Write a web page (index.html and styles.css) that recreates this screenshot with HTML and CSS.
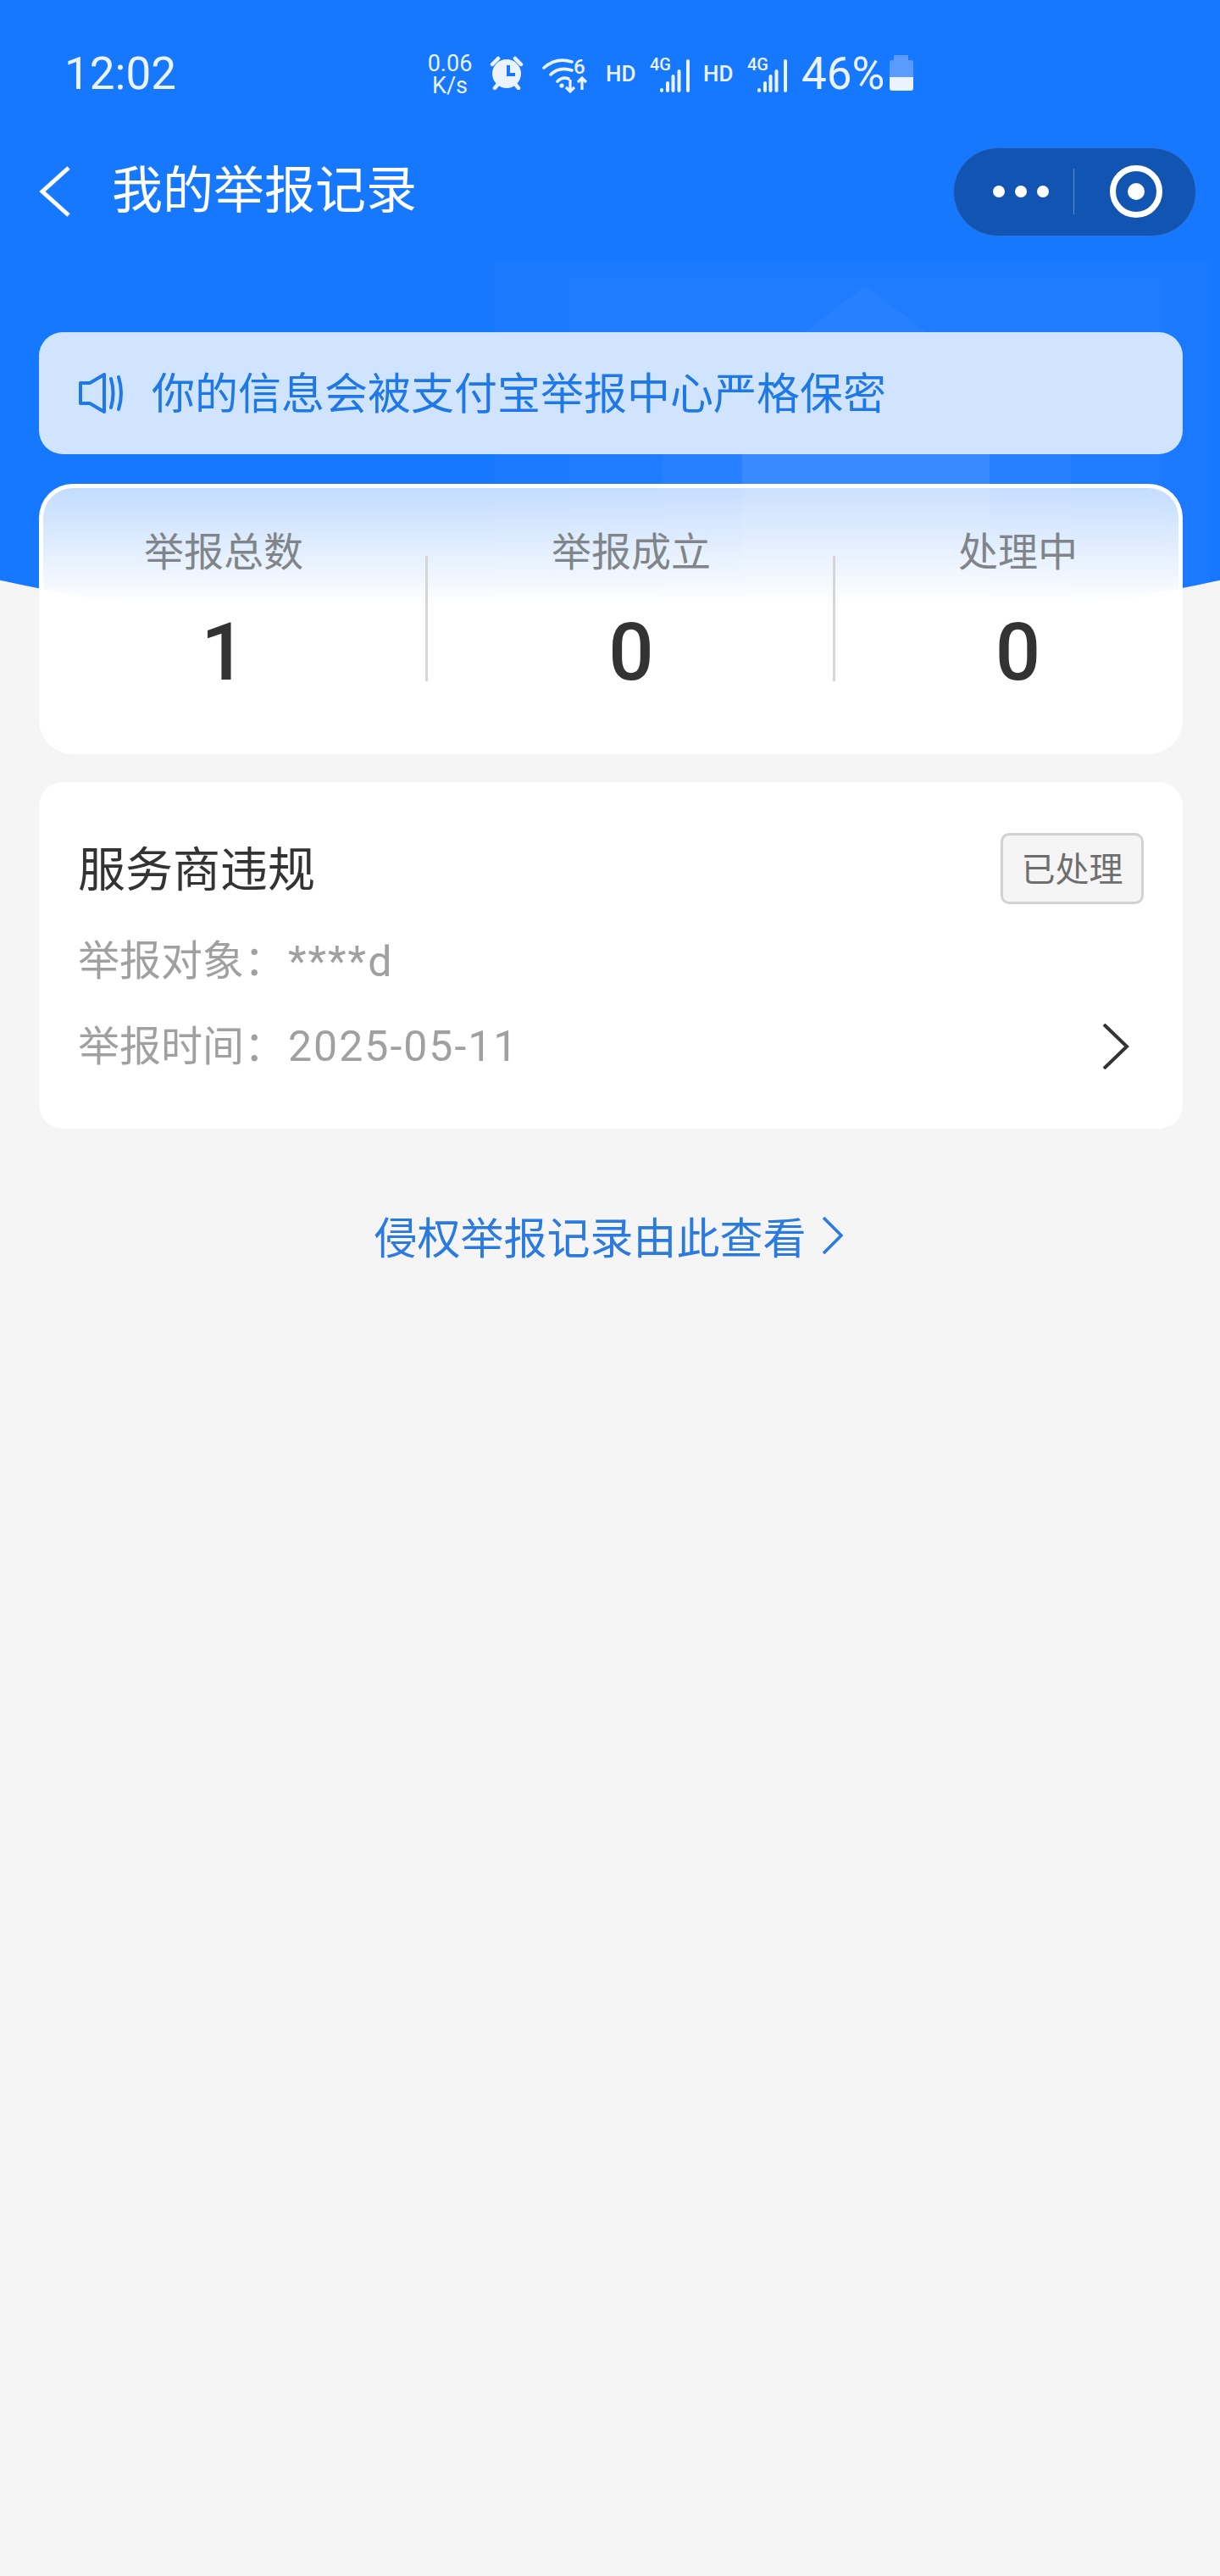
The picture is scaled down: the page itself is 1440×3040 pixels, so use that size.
FILE: index.html
```html
<!DOCTYPE html>
<html lang="zh-CN">
<head>
<meta charset="utf-8">
<title>我的举报记录</title>
<link rel="stylesheet" href="styles.css">
</head>
<body>
<div class="page">
  <div class="hero">
    <svg class="watermark" viewBox="0 0 1440 770" width="1440" height="770" aria-hidden="true">
      <rect x="585" y="310" width="843" height="460" fill="#fff" opacity=".018"/>
      <rect x="672" y="327" width="700" height="443" fill="#fff" opacity=".025"/>
      <path d="M1021 337 L782 520 V770 H1264 V520 Z" fill="#fff" opacity=".03"/>
      <rect x="876" y="440" width="292" height="330" fill="#fff" opacity=".08"/>
    </svg>
  </div>

  <div class="content">
    <div class="status">
      <span class="time">12:02</span>
      <div class="indicators">
        <div class="speed"><span>0.06</span><span>K/s</span></div>
        <svg class="alarm" viewBox="0 0 40 40" width="40" height="40" aria-hidden="true">
          <circle cx="20" cy="21" r="17" fill="#eaf3ff"/>
          <path d="M3 10 L10 3 M37 10 L30 3 M6 38 L10 33 M34 38 L30 33" stroke="#eaf3ff" stroke-width="4.5" stroke-linecap="round" fill="none"/>
          <path d="M22 11 V22 H30" stroke="#1677ff" stroke-width="4" fill="none"/>
        </svg>
        <svg class="wifi" viewBox="0 -6 54 48" width="54" height="48" aria-hidden="true">
          <path d="M2 12 Q17 -1 35 5 M10 20 Q20 10 35 15 M18 28 Q24 22 31 25" stroke="#eaf3ff" stroke-width="3.6" stroke-linecap="round" fill="none"/>
          <circle cx="23" cy="33" r="2.6" fill="#eaf3ff"/>
          <path d="M33 26 V40 M28 35 L33 40 L38 35 M47 38 V24 M42 29 L47 24 L52 29" stroke="#eaf3ff" stroke-width="3.2" fill="none"/>
          <text x="37" y="19" class="wifi-num">6</text>
        </svg>
        <span class="hd hd-first">HD</span>
        <svg class="signal" viewBox="0 -6 48 48" width="48" height="48" aria-hidden="true">
          <text x="0" y="15" class="sig-text">4G</text>
          <path d="M14 38 V39 M21 30 V39 M27.500 22 V39 M34.500 16 V39 M45 4 V39" stroke="#eaf3ff" stroke-width="4" stroke-linecap="round" fill="none"/>
        </svg>
        <span class="hd">HD</span>
        <svg class="signal" viewBox="0 -6 48 48" width="48" height="48" aria-hidden="true">
          <text x="0" y="15" class="sig-text">4G</text>
          <path d="M14 38 V39 M21 30 V39 M27.500 22 V39 M34.500 16 V39 M45 4 V39" stroke="#eaf3ff" stroke-width="4" stroke-linecap="round" fill="none"/>
        </svg>
        <span class="battery-pct">46%</span>
        <svg class="battery" viewBox="0 0 28 42" width="28" height="42" aria-hidden="true">
          <path d="M6 0 H21 Q22 0 22 1 V6 H25 Q28 6 28 9 V26 H0 V9 Q0 6 3 6 H5 V1 Q5 0 6 0 Z" fill="#5b9bff"/>
          <path d="M0 26 H28 V39 Q28 42 25 42 H3 Q0 42 0 39 Z" fill="#eaf3ff"/>
        </svg>
      </div>
    </div>

    <div class="nav">
      <svg class="back" viewBox="0 0 38 60" width="38" height="60" aria-hidden="true">
        <path d="M35 2 L4 30 L35 58" stroke="#fff" stroke-width="5" fill="none"/>
      </svg>
      <h1 class="title">我的举报记录</h1>
      <div class="capsule">
        <div class="dots"><i></i><i></i><i></i></div>
        <span class="capsule-line"></span>
        <svg class="target" viewBox="0 0 62 62" width="62" height="62" aria-hidden="true">
          <circle cx="31" cy="31" r="27.500" stroke="#fff" stroke-width="7" fill="none"/>
          <circle cx="31" cy="31" r="10" fill="#fff"/>
        </svg>
      </div>
    </div>

    <main class="main">
      <div class="notice">
        <svg class="speaker" viewBox="0 0 54 48" width="54" height="48" aria-hidden="true">
          <path d="M3 12 H14 L31 2 V46 L14 36 H3 Z" stroke="#1f78e8" stroke-width="4" stroke-linejoin="round" fill="none"/>
          <path d="M39 7 Q44 24 39 41 M48 5 Q54 24 48 43" stroke="#1f78e8" stroke-width="4" stroke-linecap="round" fill="none"/>
        </svg>
        <span class="notice-text">你的信息会被支付宝举报中心严格保密</span>
      </div>

      <section class="stats">
        <div class="stat stat-first">
          <span class="stat-label">举报总数</span>
          <span class="stat-num">1</span>
        </div>
        <span class="stat-line"></span>
        <div class="stat stat-mid">
          <span class="stat-label">举报成立</span>
          <span class="stat-num">0</span>
        </div>
        <span class="stat-line"></span>
        <div class="stat stat-last">
          <span class="stat-label">处理中</span>
          <span class="stat-num">0</span>
        </div>
      </section>

      <section class="record">
        <div class="record-head">
          <span class="record-title">服务商违规</span>
          <span class="tag">已处理</span>
        </div>
        <div class="record-row">举报对象：<span class="value">****d</span></div>
        <div class="record-row record-row-time">
          <div>举报时间：<span class="value">2025-05-11</span></div>
          <svg class="chev" viewBox="0 0 32 54" width="32" height="54" aria-hidden="true">
            <path d="M2 1 L29 27 L2 53" stroke="#333" stroke-width="4" fill="none"/>
          </svg>
        </div>
      </section>

      <div class="link">
        <span>侵权举报记录由此查看</span>
        <svg class="link-chev" viewBox="0 0 25 44" width="25" height="44" aria-hidden="true">
          <path d="M2 1 L23 22 L2 43" stroke="#2a7ae2" stroke-width="3.600" fill="none"/>
        </svg>
      </div>
    </main>
  </div>
</div>
</body>
</html>
```

FILE: styles.css
```css
* { box-sizing: border-box; }
html, body { margin: 0; padding: 0; }
body {
  background: #f5f5f5;
  font-family: Roboto, "Noto Sans CJK SC", sans-serif;
}
.page {
  position: relative;
  width: 1440px;
  height: 3040px;
  overflow: hidden;
}
.hero {
  position: absolute;
  top: 0;
  left: 0;
  width: 1440px;
  height: 770px;
  background: #1677ff;
  clip-path: circle(3390px at 720px -2628px);
}
.watermark { display: block; }
.content { position: relative; }

/* status bar */
.status {
  display: flex;
  align-items: center;
  height: 172px;
  padding-left: 76px;
  color: #eaf3ff;
}
.time {
  font-size: 53px;
  line-height: 60px;
  width: 130px;
  padding-top: 2px;
}
.indicators {
  display: flex;
  align-items: center;
  margin-left: 297px;
}
.speed {
  display: flex;
  flex-direction: column;
  align-items: center;
  width: 56px;
  font-size: 27px;
  line-height: 26px;
  margin-top: 4px;
}
.alarm { margin-left: 19px; }
.wifi { margin-left: 22px; flex: none; }
.wifi-num { font: 500 24px Roboto, sans-serif; fill: #eaf3ff; }
.hd {
  font-size: 26px;
  font-weight: 500;
  line-height: 30px;
  margin-left: 21px;
  margin-top: 2px;
  width: 36px;
}
.hd-first { margin-left: 21px; }
.signal { margin-left: 16px; flex: none; }
.signal + .hd { margin-left: 15px; }
.sig-text { font: 500 20px Roboto, sans-serif; fill: #eaf3ff; }
.battery-pct {
  font-size: 53px;
  line-height: 60px;
  margin-left: 16px;
  padding-top: 2px;
}
.battery { margin-left: 6px; }

/* navigation */
.nav {
  display: flex;
  align-items: center;
  height: 108px;
  padding-left: 46px;
  color: #fff;
}
.back { flex: none; }
.title {
  margin: 0 0 0 48px;
  font-size: 60px;
  font-weight: 400;
  line-height: 70px;
}
.capsule {
  display: flex;
  align-items: center;
  width: 287px;
  height: 105px;
  margin-left: auto;
  margin-right: 28px;
  padding-left: 46px;
  background: #1254b1;
  border-radius: 53px;
  border: 1px solid #2a72db;
}
.dots { display: flex; gap: 12px; }
.dots i {
  display: block;
  width: 14px;
  height: 14px;
  border-radius: 50%;
  background: #fff;
}
.capsule-line {
  width: 1px;
  height: 54px;
  background: rgba(255, 255, 255, .35);
  margin-left: 29px;
}
.target { margin-left: 42px; }

/* main */
.main { padding: 112px 44px 0 46px; }
.notice {
  display: flex;
  align-items: center;
  height: 144px;
  padding-left: 46px;
  background: #d0e4ff;
  border-radius: 28px;
}
.speaker { flex: none; }
.notice-text {
  margin-left: 33px;
  padding-top: 4px;
  font-size: 51px;
  line-height: 60px;
  color: #1f78e8;
}

.stats {
  display: flex;
  height: 319px;
  margin-top: 35px;
  border: 5px solid #fff;
  border-bottom: 0;
  border-radius: 40px;
  background: linear-gradient(180deg, rgba(255, 255, 255, .74) 0, #fff 44%);
}
.stat {
  display: flex;
  flex-direction: column;
  align-items: center;
  padding-top: 46px;
}
.stat-first { width: 451px; padding-right: 25px; }
.stat-mid { width: 478px; padding-left: 2px; }
.stat-last { flex: 1; padding-left: 26px; }
.stat-label {
  font-size: 47px;
  line-height: 60px;
  color: #808589;
}
.stat-num {
  margin-top: 41px;
  font-size: 94px;
  font-weight: 500;
  line-height: 94px;
  color: #333;
}
.stat-line {
  flex: none;
  width: 3px;
  height: 148px;
  margin-top: 80px;
  background: #d6d6d6;
}

.record {
  height: 409px;
  margin-top: 33px;
  padding: 60px 46px 0 46px;
  background: #fff;
  border-radius: 28px;
}
.record-head {
  display: flex;
  align-items: center;
  justify-content: space-between;
}
.record-title {
  padding-top: 4px;
  font-size: 56px;
  line-height: 70px;
  color: #333;
}
.tag {
  display: flex;
  align-items: center;
  justify-content: center;
  width: 169px;
  height: 84px;
  padding-bottom: 5px;
  font-size: 40px;
  color: #6e6e6e;
  background: #f5f5f5;
  border: 3px solid #d2d2d2;
  border-radius: 10px;
}
.record-row {
  display: flex;
  align-items: center;
  height: 60px;
  margin-top: 38px;
  font-size: 49px;
  line-height: 60px;
  color: #a0a0a0;
}
.record-row-time {
  justify-content: space-between;
  margin-top: 40px;
  padding-right: 17px;
}
.value {
  margin-left: 3px;
  font-size: 50px;
  letter-spacing: 2px;
}
.chev { flex: none; }

.link {
  display: flex;
  align-items: center;
  justify-content: center;
  gap: 18px;
  height: 60px;
  margin-top: 96px;
  padding-right: 6px;
  font-size: 51px;
  color: #2a7ae2;
}
.link-chev { flex: none; }
```
